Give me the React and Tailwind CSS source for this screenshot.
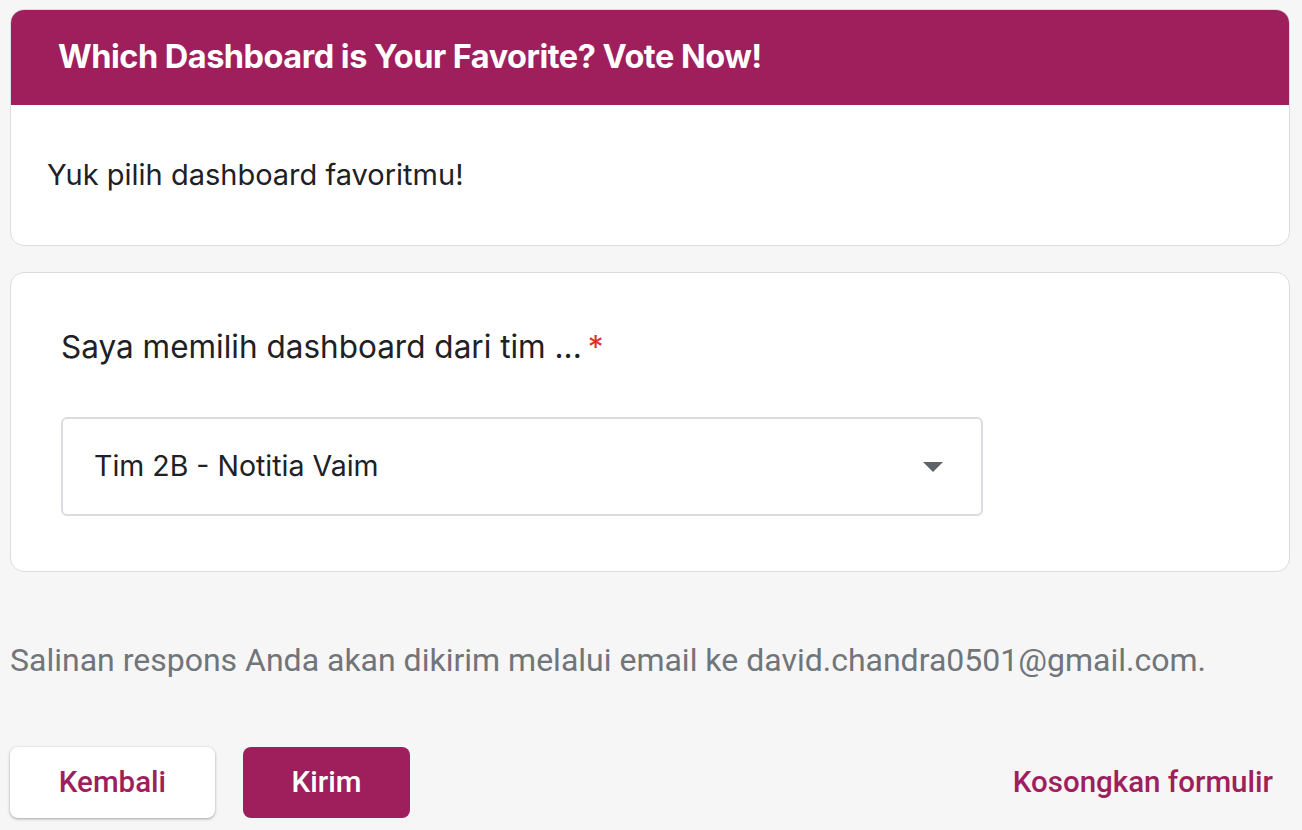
export default function App() {
  return (
    <div className="min-h-[830px] bg-[#f6f6f6] pl-[10px] pr-[12px] pt-[9px] font-['Inter',sans-serif]">
      {/* title card */}
      <div className="overflow-hidden rounded-[14px] border border-[#dadce0] bg-white">
        <div className="flex h-[96px] items-center bg-[#9e1f5c] pl-[48px] -mx-px -mt-px">
          <h1 className="text-[32.5px] font-bold tracking-[-0.5px] text-white">
            Which Dashboard is Your Favorite? Vote Now!
          </h1>
        </div>
        <div className="flex h-[140px] items-center pl-[36px]">
          <p className="text-[29px] text-[#202124]">Yuk pilih dashboard favoritmu!</p>
        </div>
      </div>

      {/* question card */}
      <div className="mt-[26px] rounded-[14px] border border-[#dadce0] bg-white pb-[55px] pl-[50px] pt-[56px]">
        <div className="flex h-[36px] items-center text-[31.5px] text-[#202124]">
          <span>Saya memilih dashboard dari tim ...</span>
          <span className="ml-[6px] text-[#d93025]">*</span>
        </div>
        <div className="mt-[52px] flex h-[99px] w-[922px] items-center justify-between rounded-[6px] border-2 border-[#dadce0] pl-[31px] pr-[38px]">
          <span className="text-[28.5px] text-[#202124]">Tim 2B - Notitia Vaim</span>
          <svg width="20" height="10" viewBox="0 0 20 10">
            <path d="M0 0h20L10 10z" fill="#5f6368" />
          </svg>
        </div>
      </div>

      <p className="mt-[68px] font-['Roboto',sans-serif] text-[32px] leading-[40px] text-[#70757a]">
        Salinan respons Anda akan dikirim melalui email ke david.chandra0501@gmail.com.
      </p>

      <div className="mt-[67px] flex items-center font-['Roboto',sans-serif]">
        <button className="h-[71px] w-[205px] rounded-[8px] bg-white text-[29.5px] font-medium text-[#9e1f5c] shadow-[0_1px_3px_rgba(0,0,0,0.35)]">
          Kembali
        </button>
        <button className="ml-[28px] h-[71px] w-[167px] rounded-[8px] bg-[#9e1f5c] text-[29.5px] font-medium text-white">
          Kirim
        </button>
        <button className="ml-auto mr-[17px] text-[29.5px] font-medium text-[#9e1f5c]">
          Kosongkan formulir
        </button>
      </div>
    </div>
  )
}
